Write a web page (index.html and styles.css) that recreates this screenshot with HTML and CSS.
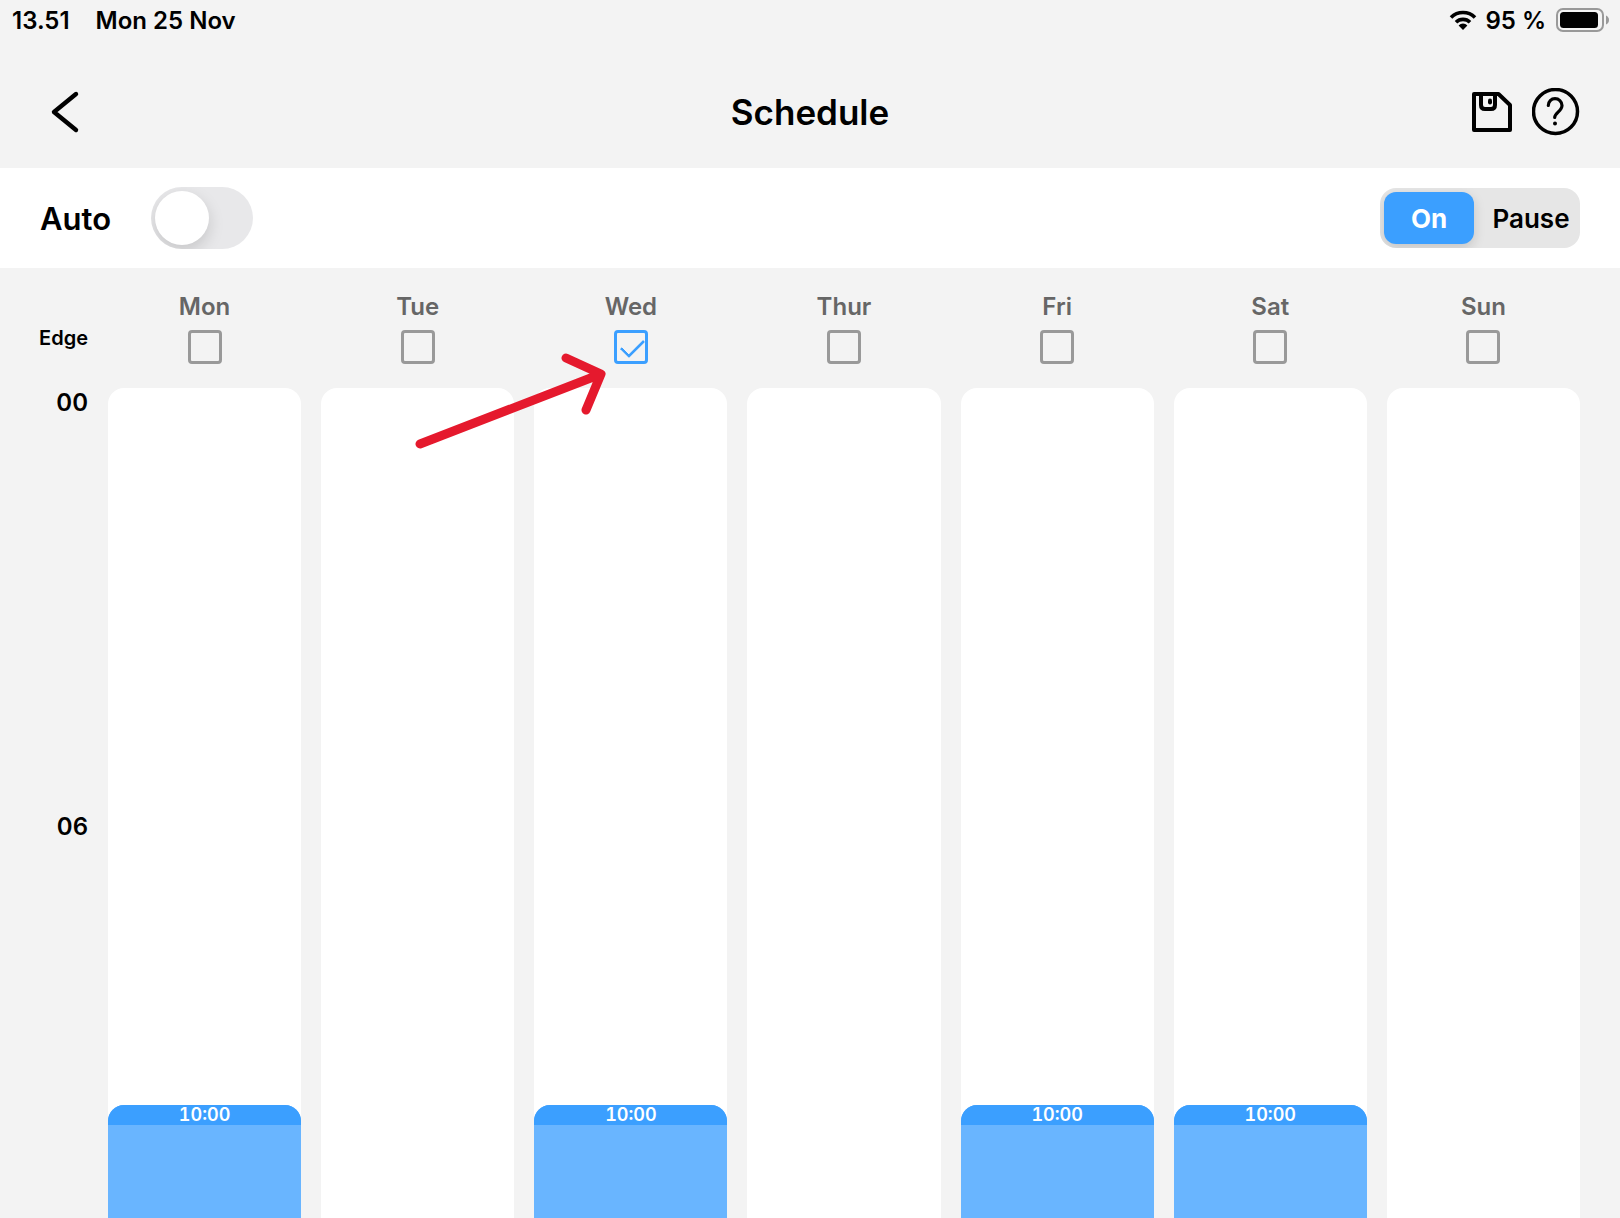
FILE: index.html
```html
<!DOCTYPE html>
<html lang="en">
<head>
    <meta charset="UTF-8">
    <meta name="viewport" content="width=device-width, initial-scale=1.0">
    <title>Schedule</title>
    <link rel="stylesheet" href="styles.css">
</head>
<body>
    <div class="status-bar">
        <span>13.51</span>
        <span class="date">Mon 25 Nov</span>
        <svg class="wifi" width="28" height="20" viewBox="0 0 28 20">
            <path d="M2 7.5a17 17 0 0 1 24 0M7 12.2a10 10 0 0 1 14 0" fill="none" stroke="#000" stroke-width="3.6"/>
            <path d="M14 20l-4.4-4.6a6.2 6.2 0 0 1 8.8 0z"/>
        </svg>
        <span>95 %</span>
        <svg class="battery" width="54" height="24" viewBox="0 0 54 24">
            <rect x="1" y="1" width="46" height="22" rx="6" fill="none" stroke="#999" stroke-width="2"/>
            <rect x="4" y="4" width="38" height="16" rx="3.5"/>
            <path d="M50 7.5q3 1.5 3 4.5t-3 4.5z" fill="#999"/>
        </svg>
    </div>

    <header class="header">
        <button class="icon-btn" aria-label="Back">
            <svg width="48" height="48" viewBox="0 0 48 48">
                <path d="M36 6L14 24l22 18" fill="none" stroke="#000" stroke-width="4.4" stroke-linecap="round" stroke-linejoin="round"/>
            </svg>
        </button>
        <h1>Schedule</h1>
        <div class="actions">
            <button class="icon-btn" aria-label="Save">
                <svg width="40" height="48" viewBox="0 0 40 48" fill="none" stroke="#000" stroke-width="4" stroke-linejoin="round">
                    <path d="M2 6h24.5L38 17v25H2z"/>
                    <path d="M9 6v11q0 4 4 4h6q4 0 4-4V6"/>
                    <path d="M18 12.5v2" stroke-linecap="round"/>
                </svg>
            </button>
            <button class="icon-btn" aria-label="Help">
                <svg width="48" height="48" viewBox="0 0 48 48" fill="none" stroke="#000" stroke-linecap="round">
                    <circle cx="23.5" cy="23.5" r="22" stroke-width="3.5"/>
                    <path d="M16.3 17.5c0-4 3-6.8 6.7-6.8s7 2.8 7 6.800c0 5.5-7.300 7.5-7.300 12" stroke-width="3.2"/>
                    <circle cx="23" cy="35.5" r="2" fill="#000" stroke="none"/>
                </svg>
            </button>
        </div>
    </header>

    <div class="toolbar">
        <label class="auto" for="auto">Auto</label>
        <input class="switch" type="checkbox" id="auto">
        <div class="segment">
            <label class="option"><input type="radio" name="mode" checked><span>On</span></label>
            <label class="option"><input type="radio" name="mode"><span>Pause</span></label>
        </div>
    </div>

    <main class="schedule">
        <div class="edge">Edge</div>
        <label class="day">Mon<input type="checkbox"></label>
        <label class="day">Tue<input type="checkbox"></label>
        <label class="day">Wed<input type="checkbox" checked>
            <svg class="arrow" width="192" height="98" viewBox="0 0 192 98">
                <path d="M5 91L186 21M151 5l35 16-15 36" fill="none" stroke="#e5192d" stroke-width="9" stroke-linecap="round" stroke-linejoin="round"/>
            </svg>
        </label>
        <label class="day">Thur<input type="checkbox"></label>
        <label class="day">Fri<input type="checkbox"></label>
        <label class="day">Sat<input type="checkbox"></label>
        <label class="day">Sun<input type="checkbox"></label>

        <div class="hours">
            <span>00</span>
            <span>06</span>
        </div>
        <div class="column"><div class="slot"><span>10:00</span></div></div>
        <div class="column"></div>
        <div class="column"><div class="slot"><span>10:00</span></div></div>
        <div class="column"></div>
        <div class="column"><div class="slot"><span>10:00</span></div></div>
        <div class="column"><div class="slot"><span>10:00</span></div></div>
        <div class="column"></div>
    </main>
</body>
</html>
```
FILE: styles.css
```css
* {
    box-sizing: border-box;
}
body {
    margin: 0;
    min-height: 100vh;
    display: flex;
    flex-direction: column;
    font-family: Inter, "Liberation Sans", sans-serif;
    font-size: 24px;
    font-weight: 600;
    color: #000;
    background-color: #f3f3f3;
}
.status-bar {
    display: flex;
    align-items: center;
    height: 40px;
    padding: 0 10px 0 12px;
}
.date {
    margin-left: 26px;
}
.wifi {
    margin: 0 8px 0 auto;
}
.battery {
    margin-left: 10px;
}
.header {
    display: grid;
    grid-template-columns: 1fr auto 1fr;
    align-items: center;
    height: 128px;
    padding: 16px 40px 0;
}
h1 {
    margin: 0;
    font-size: 35px;
    font-weight: 600;
}
.icon-btn {
    display: flex;
    justify-self: start;
    padding: 0;
    border: none;
    background: none;
    cursor: pointer;
}
.actions {
    display: flex;
    justify-content: flex-end;
    gap: 20px;
}
.toolbar {
    display: flex;
    align-items: center;
    height: 100px;
    padding: 0 40px;
    background-color: #fff;
}
.auto {
    font-size: 31px;
}
.switch {
    appearance: none;
    display: flex;
    width: 102px;
    height: 62px;
    margin: 0 0 0 40px;
    padding: 4px;
    border-radius: 31px;
    background-color: #e8e8ea;
    overflow: hidden;
    cursor: pointer;
}
.switch::before {
    content: "";
    width: 54px;
    height: 54px;
    border-radius: 50%;
    background-color: #fff;
    box-shadow: 0 6px 16px rgba(0, 0, 0, 0.15);
}
.switch:checked {
    justify-content: flex-end;
    background-color: #3b9fff;
}
.segment {
    display: flex;
    gap: 8px;
    width: 200px;
    height: 60px;
    margin-left: auto;
    padding: 4px 0 4px 4px;
    border-radius: 16px;
    background-color: #e6e6e6;
    overflow: hidden;
    font-size: 26px;
}
.option {
    min-width: 90px;
    cursor: pointer;
}
.option:last-child {
    flex: 1;
}
.option input {
    position: absolute;
    opacity: 0;
}
.option span {
    display: flex;
    align-items: center;
    justify-content: center;
    height: 52px;
    border-radius: 12px;
}
.option input:checked + span {
    color: #fff;
    font-weight: 700;
    background-color: #3b9fff;
    box-shadow: 0 4px 12px rgba(0, 0, 0, 0.15);
}
.schedule {
    flex: 1;
    display: grid;
    grid-template-columns: 48px repeat(7, 1fr);
    grid-template-rows: 120px 1fr;
    column-gap: 20px;
    padding: 0 40px;
}
.edge {
    justify-self: end;
    padding-top: 58px;
    font-size: 20px;
    line-height: 24px;
}
.day {
    position: relative;
    display: flex;
    flex-direction: column;
    align-items: center;
    gap: 8px;
    padding-top: 24px;
    line-height: 30px;
    color: #666;
}
.day input {
    appearance: none;
    display: flex;
    width: 34px;
    height: 34px;
    margin: 0;
    border: 3px solid #999;
    border-radius: 4px;
    cursor: pointer;
}
.day input:checked {
    border-color: #3b9fff;
}
.day input:checked::before {
    content: "";
    width: 20px;
    height: 10px;
    margin: 6px 0 0 4px;
    border-left: 3px solid #3b9fff;
    border-bottom: 3px solid #3b9fff;
    border-radius: 1px;
    transform: rotate(-45deg);
}
/* sits over the grid, pointing at the ticked day */
.arrow {
    position: absolute;
    top: 85px;
    right: 120px;
    z-index: 1;
    pointer-events: none;
}
.hours {
    display: flex;
    flex-direction: column;
    align-items: flex-end;
    line-height: 30px;
}
.hours span {
    height: 424px;
}
.hours span:last-child {
    height: 30px;
}
.column {
    display: flex;
    padding-top: 717px;
    border-radius: 16px 16px 0 0;
    background-color: #fff;
}
.slot {
    flex: 1;
    min-height: 113px;
    border-radius: 16px 16px 0 0;
    background-color: #69b5ff;
    overflow: hidden;
}
.slot span {
    display: block;
    font-size: 18px;
    line-height: 20px;
    font-variant-numeric: tabular-nums;
    text-align: center;
    color: #fff;
    background-color: #3b9fff;
}
```
